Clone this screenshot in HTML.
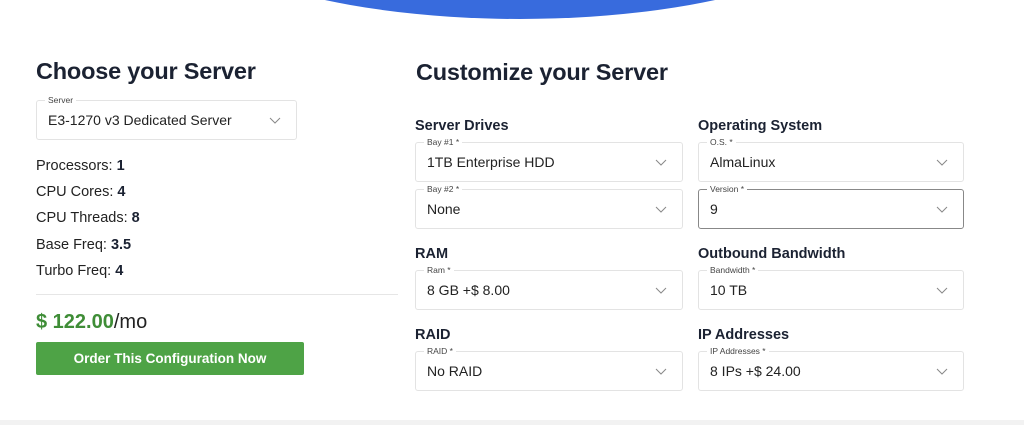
<!DOCTYPE html>
<html><head><style>
*{margin:0;padding:0;box-sizing:border-box}
body{width:1024px;height:425px;background:#fff;font-family:"Liberation Sans",sans-serif;color:#1c2434;position:relative;overflow:hidden}
.a{position:absolute}
h1{position:absolute;font-size:23.5px;font-weight:bold;color:#1b2232;letter-spacing:-0.2px}
h2{position:absolute;font-size:14.5px;font-weight:bold;color:#1b2232}
.sel{position:absolute;border:1px solid #e3e3e3;border-radius:3px;font-size:14px;color:#222}
.sel .lb{position:absolute;top:-6px;left:8px;background:#fff;padding:0 3px;font-size:8.5px;color:#444;line-height:10px}
.sel .v{position:absolute;left:11px;top:50%;transform:translateY(-50%)}
.sel svg{position:absolute;right:15px;top:50%;margin-top:-3px}
.sp{position:absolute;left:36px;font-size:14.5px;color:#222}
.sp b{color:#1b2232}
</style></head><body>
<svg class="a" style="left:0;top:0" width="1024" height="30"><ellipse cx="520" cy="-100" rx="360" ry="119" fill="#386bdd"/></svg>
<div class="a" style="left:0;top:420px;width:1024px;height:5px;background:#f2f2f2"></div>

<h1 style="left:36px;top:58px">Choose your Server</h1>
<div class="sel" style="left:36px;top:100px;width:261px;height:40px"><span class="lb">Server</span><span class="v">E3-1270 v3 Dedicated Server</span><svg width="12" height="7"><path d="M1 1l5 5 5-5" fill="none" stroke="#888" stroke-width="1"/></svg></div>
<div class="sp" style="top:158px">Processors: <b>1</b></div>
<div class="sp" style="top:184px">CPU Cores: <b>4</b></div>
<div class="sp" style="top:210px">CPU Threads: <b>8</b></div>
<div class="sp" style="top:237px">Base Freq: <b>3.5</b></div>
<div class="sp" style="top:263px">Turbo Freq: <b>4</b></div>
<div class="a" style="left:36px;top:294px;width:362px;height:1px;background:#e6e6e6"></div>
<div class="a" style="left:36px;top:311px;font-size:20px;color:#222"><b style="color:#3f8d37">$ 122.00</b>/mo</div>
<div class="a" style="left:36px;top:342px;width:268px;height:33px;background:#4ea346;border-radius:2px;color:#fff;font-size:13.5px;font-weight:bold;text-align:center;line-height:33px">Order This Configuration Now</div>

<h1 style="left:416px;top:59px">Customize your Server</h1>
<h2 style="left:415px;top:118px">Server Drives</h2>
<h2 style="left:698px;top:118px">Operating System</h2>
<h2 style="left:415px;top:246px">RAM</h2>
<h2 style="left:698px;top:246px">Outbound Bandwidth</h2>
<h2 style="left:415px;top:327px">RAID</h2>
<h2 style="left:698px;top:327px">IP Addresses</h2>

<div class="sel" style="left:415px;top:142px;width:268px;height:40px"><span class="lb">Bay #1 *</span><span class="v">1TB Enterprise HDD</span><svg width="12" height="7"><path d="M1 1l5 5 5-5" fill="none" stroke="#888"/></svg></div>
<div class="sel" style="left:415px;top:189px;width:268px;height:40px"><span class="lb">Bay #2 *</span><span class="v">None</span><svg width="12" height="7"><path d="M1 1l5 5 5-5" fill="none" stroke="#888"/></svg></div>
<div class="sel" style="left:698px;top:142px;width:266px;height:40px"><span class="lb">O.S. *</span><span class="v">AlmaLinux</span><svg width="12" height="7"><path d="M1 1l5 5 5-5" fill="none" stroke="#888"/></svg></div>
<div class="sel" style="left:698px;top:189px;width:266px;height:40px;border-color:#888"><span class="lb">Version *</span><span class="v">9</span><svg width="12" height="7"><path d="M1 1l5 5 5-5" fill="none" stroke="#888"/></svg></div>
<div class="sel" style="left:415px;top:270px;width:268px;height:40px"><span class="lb">Ram *</span><span class="v">8 GB +$ 8.00</span><svg width="12" height="7"><path d="M1 1l5 5 5-5" fill="none" stroke="#888"/></svg></div>
<div class="sel" style="left:698px;top:270px;width:266px;height:40px"><span class="lb">Bandwidth *</span><span class="v">10 TB</span><svg width="12" height="7"><path d="M1 1l5 5 5-5" fill="none" stroke="#888"/></svg></div>
<div class="sel" style="left:415px;top:351px;width:268px;height:40px"><span class="lb">RAID *</span><span class="v">No RAID</span><svg width="12" height="7"><path d="M1 1l5 5 5-5" fill="none" stroke="#888"/></svg></div>
<div class="sel" style="left:698px;top:351px;width:266px;height:40px"><span class="lb">IP Addresses *</span><span class="v">8 IPs +$ 24.00</span><svg width="12" height="7"><path d="M1 1l5 5 5-5" fill="none" stroke="#888"/></svg></div>
</body></html>
